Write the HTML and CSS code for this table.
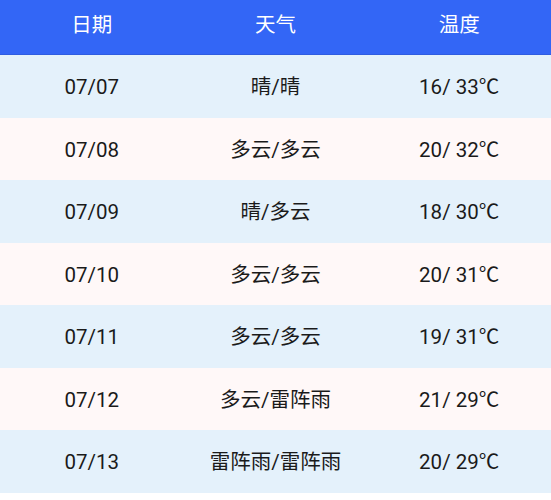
FILE: index.html
```html
<!DOCTYPE html>
<html lang="zh-CN">
<head>
<meta charset="utf-8">
<title>天气预报</title>
<link rel="stylesheet" href="styles.css">
</head>
<body>
<div class="table">
  <div class="row head"><div class="cell">日期</div><div class="cell">天气</div><div class="cell">温度</div></div>
  <div class="row blue"><div class="cell">07/07</div><div class="cell">晴/晴</div><div class="cell">16/ 33℃</div></div>
  <div class="row pink"><div class="cell">07/08</div><div class="cell">多云/多云</div><div class="cell">20/ 32℃</div></div>
  <div class="row blue"><div class="cell">07/09</div><div class="cell">晴/多云</div><div class="cell">18/ 30℃</div></div>
  <div class="row pink"><div class="cell">07/10</div><div class="cell">多云/多云</div><div class="cell">20/ 31℃</div></div>
  <div class="row blue"><div class="cell">07/11</div><div class="cell">多云/多云</div><div class="cell">19/ 31℃</div></div>
  <div class="row pink"><div class="cell">07/12</div><div class="cell">多云/雷阵雨</div><div class="cell">21/ 29℃</div></div>
  <div class="row blue"><div class="cell">07/13</div><div class="cell">雷阵雨/雷阵雨</div><div class="cell">20/ 29℃</div></div>
</div>
</body>
</html>
```
FILE: styles.css
```css
html, body {
  margin: 0;
  padding: 0;
  background: #ffffff;
}
body {
  font-family: Roboto, "Noto Sans CJK SC", sans-serif;
  color: #1a1a1a;
  width: 551px;
}
.table {
  display: flex;
  flex-direction: column;
}
.row {
  display: grid;
  grid-template-columns: 1fr 1fr 1fr;
  height: 62.5px;
  align-items: center;
  font-size: 20.5px;
}
.cell {
  text-align: center;
  line-height: 1;
  padding-top: 2px;
}
.head {
  height: 55px;
  background: #3366f6;
  color: #ffffff;
  border-bottom: 1px solid #2f5de0;
  box-sizing: border-box;
}
.head .cell {
  padding-top: 0;
  padding-bottom: 3px;
}
.blue {
  background: #e4f1fb;
}
.pink {
  background: #fff8f8;
}
```
